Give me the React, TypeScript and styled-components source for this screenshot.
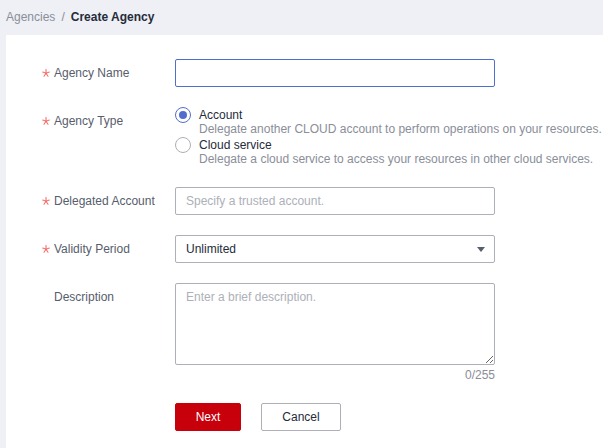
import React from "react";
import styled, { createGlobalStyle } from "styled-components";

const Global = createGlobalStyle`
  html, body { margin: 0; padding: 0; background: #eef0f5; }
  body { font-family: "Liberation Sans", Arial, sans-serif; font-size: 12px; color: #252b3a; }
  * { box-sizing: border-box; }
`;

const Page = styled.div`
  padding-left: 6px;
  min-height: 448px;
  display: flex;
  flex-direction: column;
`;

const Breadcrumb = styled.div`
  height: 35px;
  display: flex;
  align-items: center;
  gap: 6px;
  padding-bottom: 2px;
  font-size: 12px;
`;

const Crumb = styled.span<{ $current?: boolean }>`
  color: ${(p) => (p.$current ? "#252b3a" : "#8a8e99")};
  font-weight: ${(p) => (p.$current ? 700 : 400)};
`;

const Panel = styled.div`
  background: #fff;
  flex: 1;
  padding: 24px 0 0 36px;
  display: flex;
  flex-direction: column;
`;

const Row = styled.div`
  display: flex;
  align-items: flex-start;
  margin-bottom: 20px;
`;

const Label = styled.div`
  width: 133px;
  flex-shrink: 0;
  display: flex;
  align-items: center;
  height: 28px;
  color: #575d6c;
  font-size: 12px;
`;

const Star = styled.span`
  width: 12px;
  display: flex;
  align-items: center;
  color: #f66f6a;
`;

const Control = styled.div`
  width: 320px;
  display: flex;
  flex-direction: column;
`;

const Input = styled.input<{ $focused?: boolean }>`
  width: 320px;
  height: 28px;
  border: 1px solid ${(p) => (p.$focused ? "#526ecc" : "#adb0b8")};
  border-radius: 2px;
  padding: 0 10px;
  font: inherit;
  font-size: 12px;
  color: #252b3a;
  outline: none;
  &::placeholder { color: #adb0b8; }
`;

const RadioGroup = styled.div`
  display: flex;
  flex-direction: column;
`;

const Option = styled.div`
  display: grid;
  grid-template-columns: 16px auto;
  column-gap: 8px;
  white-space: nowrap;
`;

const RadioCircle = styled.span<{ $checked?: boolean }>`
  width: 16px;
  height: 16px;
  margin: 0 0 -2px 0;
  border-radius: 50%;
  border: 1px solid ${(p) => (p.$checked ? "#526ecc" : "#adb0b8")};
  display: flex;
  align-items: center;
  justify-content: center;
  background: #fff;
  &::after {
    content: "";
    width: 8px;
    height: 8px;
    border-radius: 50%;
    background: ${(p) => (p.$checked ? "#526ecc" : "transparent")};
  }
`;

const OptionTitle = styled.span`
  line-height: 14px;
  padding-top: 1px;
  height: 14px;
  color: #252b3a;
`;

const OptionDesc = styled.span`
  grid-column: 2;
  line-height: 16px;
  color: #8a8e99;
`;

const Select = styled.div`
  width: 320px;
  height: 28px;
  border: 1px solid #adb0b8;
  border-radius: 2px;
  padding: 0 10px;
  display: flex;
  align-items: center;
  justify-content: space-between;
  color: #252b3a;
`;

const Caret = styled.span`
  width: 0;
  height: 0;
  border-left: 4px solid transparent;
  border-right: 4px solid transparent;
  border-top: 5px solid #575d6c;
  margin-right: -1px;
`;

const TextArea = styled.textarea`
  width: 320px;
  height: 82px;
  border: 1px solid #adb0b8;
  border-radius: 2px;
  padding: 4px 10px;
  font: inherit;
  font-size: 12px;
  line-height: 18px;
  resize: vertical;
  outline: none;
  display: block;
  &::placeholder { color: #adb0b8; }
`;

const Counter = styled.div`
  text-align: right;
  color: #8a8e99;
  line-height: 16px;
  margin-top: 2px;
`;

const Actions = styled.div`
  display: flex;
  gap: 20px;
  padding-left: 133px;
`;

const Button = styled.button<{ $primary?: boolean }>`
  height: 28px;
  min-width: ${(p) => (p.$primary ? "66px" : "80px")};
  border-radius: 2px;
  border: 1px solid ${(p) => (p.$primary ? "#c7000b" : "#adb0b8")};
  background: ${(p) => (p.$primary ? "#c7000b" : "#fff")};
  color: ${(p) => (p.$primary ? "#fff" : "#252b3a")};
  font: inherit;
  font-size: 12px;
  padding: 0 12px;
`;

const StarIcon = () => (
  <svg width="8" height="8" viewBox="0 0 8 8" fill="none" stroke="#f66f6a" strokeWidth="1.1" strokeLinecap="round">
    <line x1="4" y1="0.6" x2="4" y2="4.2" />
    <line x1="4" y1="4.2" x2="0.7" y2="3.1" />
    <line x1="4" y1="4.2" x2="7.3" y2="3.1" />
    <line x1="4" y1="4.2" x2="2" y2="7.2" />
    <line x1="4" y1="4.2" x2="6" y2="7.2" />
  </svg>
);

const FormLabel = ({ text, required }: { text: string; required?: boolean }) => (
  <Label>
    <Star>{required ? <StarIcon /> : null}</Star>
    <span>{text}</span>
  </Label>
);

export default function App() {
  return (
    <>
      <Global />
      <Page>
        <Breadcrumb>
          <Crumb>Agencies</Crumb>
          <Crumb>/</Crumb>
          <Crumb $current>Create Agency</Crumb>
        </Breadcrumb>
        <Panel>
          <Row>
            <FormLabel text="Agency Name" required />
            <Control>
              <Input $focused />
            </Control>
          </Row>
          <Row>
            <FormLabel text="Agency Type" required />
            <RadioGroup>
              <Option>
                <RadioCircle $checked />
                <OptionTitle>Account</OptionTitle>
                <OptionDesc>Delegate another CLOUD account to perform operations on your resources.</OptionDesc>
              </Option>
              <Option>
                <RadioCircle />
                <OptionTitle>Cloud service</OptionTitle>
                <OptionDesc>Delegate a cloud service to access your resources in other cloud services.</OptionDesc>
              </Option>
            </RadioGroup>
          </Row>
          <Row>
            <FormLabel text="Delegated Account" required />
            <Control>
              <Input placeholder="Specify a trusted account." />
            </Control>
          </Row>
          <Row>
            <FormLabel text="Validity Period" required />
            <Control>
              <Select>
                <span>Unlimited</span>
                <Caret />
              </Select>
            </Control>
          </Row>
          <Row>
            <FormLabel text="Description" />
            <Control>
              <TextArea placeholder="Enter a brief description." />
              <Counter>0/255</Counter>
            </Control>
          </Row>
          <Actions>
            <Button $primary>Next</Button>
            <Button>Cancel</Button>
          </Actions>
        </Panel>
      </Page>
    </>
  );
}
